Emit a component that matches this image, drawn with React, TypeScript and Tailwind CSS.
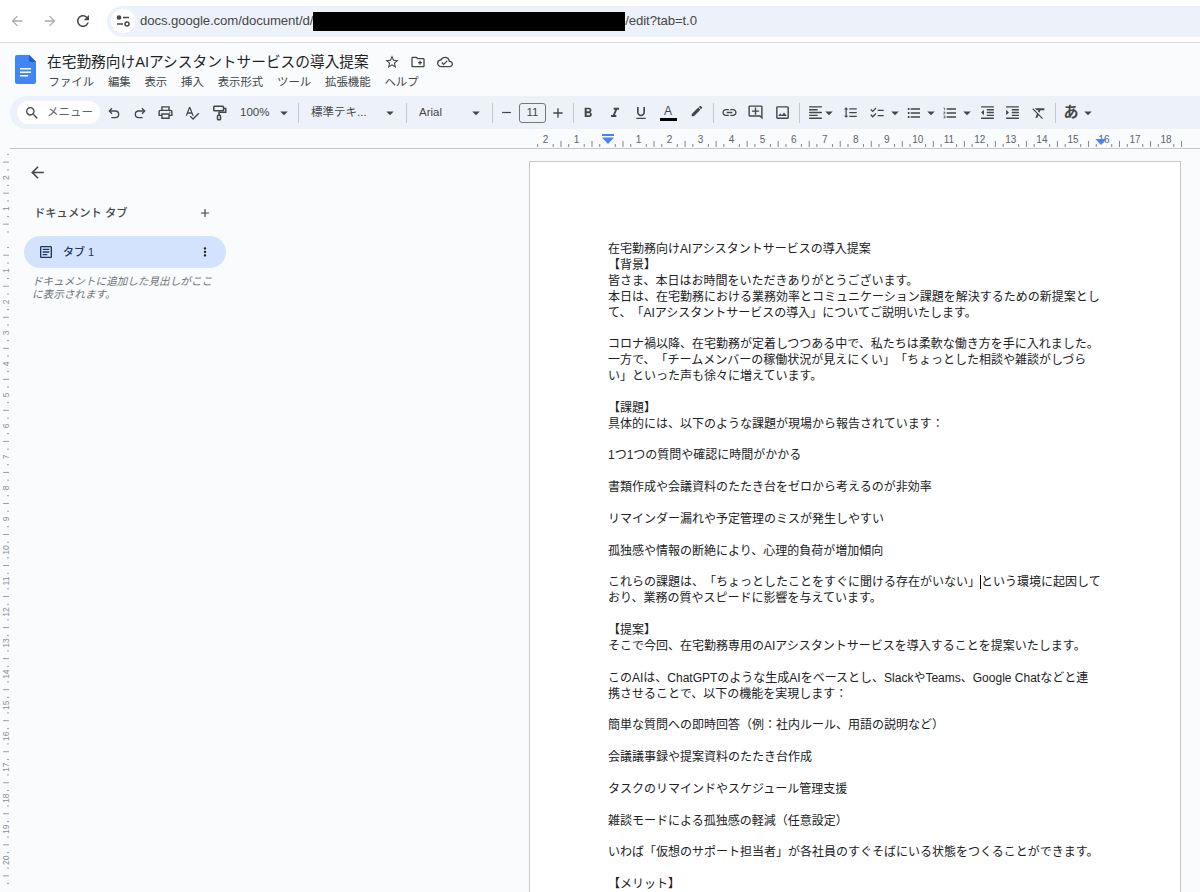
import React from "react";
import {
  MdArrowBack, MdArrowForward, MdRefresh, MdSearch, MdOutlinePrint, MdSpellcheck,
  MdFormatBold, MdFormatItalic, MdFormatUnderlined, MdLink, MdOutlineAddComment,
  MdOutlineImage, MdFormatAlignLeft, MdFormatLineSpacing, MdChecklist, MdFormatListBulleted, MdFormatListNumbered,
  MdFormatIndentDecrease, MdFormatIndentIncrease, MdFormatClear, MdStarBorder, MdOutlineCreateNewFolder,
  MdOutlineCloudDone, MdAdd, MdMoreVert, MdOutlineArticle, MdRemove, MdArrowDropDown, MdEdit,
} from "react-icons/md";

const Slot = ({ className = "", children }: { className?: string; children?: React.ReactNode }) => (
  <div className={"flex h-6 shrink-0 items-center justify-center text-[#444746] " + className}>{children}</div>
);
const Caret = ({ className = "w-4" }: { className?: string }) => (
  <Slot className={className}><MdArrowDropDown className="shrink-0 text-[18px]" /></Slot>
);
const Divider = ({ className }: { className: string }) => (
  <Slot className={className}><div className="h-5 w-px shrink-0 bg-[#c7c7c7]" /></Slot>
);

const UndoIcon = () => (
  <svg width="16" height="16" viewBox="0 0 24 24" fill="none" stroke="#444746" strokeWidth="2">
    <path d="M9 5L5 9l4 4" />
    <path d="M5 9h9a5 5 0 0 1 0 10H8" />
  </svg>
);
const RedoIcon = () => (
  <svg width="16" height="16" viewBox="0 0 24 24" fill="none" stroke="#444746" strokeWidth="2">
    <path d="M15 5l4 4-4 4" />
    <path d="M19 9h-9a5 5 0 0 0 0 10h6" />
  </svg>
);
const PaintIcon = () => (
  <svg width="18" height="18" viewBox="0 0 24 24" fill="none" stroke="#444746" strokeWidth="2">
    <rect x="5" y="3" width="13" height="6" rx="1" />
    <path d="M18 6h3v5h-9v4" />
    <rect x="10" y="15" width="4" height="6" rx="1" />
  </svg>
);
const SiteIcon = () => (
  <svg width="16" height="16" viewBox="0 0 16 16" fill="none" stroke="#474747" strokeWidth="1.5">
    <circle cx="4" cy="4.5" r="1.6" fill="#474747" />
    <path d="M8 4.5h6" />
    <path d="M2 11h6" />
    <circle cx="12" cy="11" r="2" />
  </svg>
);

const CM = 31.03;
const ZERO_X = 597.5; // inside ruler svg (x=607.5 on page)
const HRuler = () => {
  const ticks: React.ReactNode[] = [];
  const labels: React.ReactNode[] = [];
  for (let i = -10; i <= 76; i++) {
    const x = ZERO_X + (i * CM) / 4;
    if (x < 520 || x > 1172) continue;
    const m = ((i % 4) + 4) % 4;
    if (m === 0) {
      const n = Math.abs(i / 4);
      if (n !== 0) labels.push(<text key={i} x={x} y={14} textAnchor="middle" fontSize="10" fill="#5f6368" fontFamily="Liberation Sans, sans-serif">{n}</text>);
    } else {
      const h = m === 2 ? 6 : 3;
      ticks.push(<line key={i} x1={x} x2={x} y1={18 - h} y2={18} stroke="#80868b" strokeWidth="1" />);
    }
  }
  return (
    <svg width="1190" height="19" viewBox="0 0 1190 19" className="block">
      {ticks}
      {labels}
      <path d="M592 5h12v2h-12z" fill="#4285f4" />
      <path d="M592 8.5h12l-6 6.5z" fill="#4285f4" />
      <path d="M1085.5 10h11l-5.5 6z" fill="#4285f4" />
    </svg>
  );
};

const VRuler = () => {
  const Y0 = 90.7; // y=239.7 on page
  const items: React.ReactNode[] = [];
  for (let i = -12; i <= 90; i++) {
    const y = Y0 + (i * CM) / 4;
    if (y < 0 || y > 745) continue;
    const m = ((i % 4) + 4) % 4;
    if (m === 0) {
      const n = Math.abs(i / 4);
      if (n !== 0 && y < 730)
        items.push(<text key={i} x={6} y={y} textAnchor="middle" fontSize="8.5" fill="#8a8f94" fontFamily="Liberation Sans, sans-serif" transform={`rotate(-90 6 ${y}) translate(0 3)`}>{n}</text>);
    } else {
      items.push(<line key={i} x1={m === 2 ? 3 : 7} x2={9} y1={y} y2={y} stroke="#9aa0a6" strokeWidth="1" />);
    }
  }
  return (
    <svg width="10" height="743" viewBox="0 0 10 743" className="block shrink-0">{items}</svg>
  );
};

const lines: React.ReactNode[] = [
  "在宅勤務向けAIアシスタントサービスの導入提案",
  "【背景】",
  "皆さま、本日はお時間をいただきありがとうございます。",
  "本日は、在宅勤務における業務効率とコミュニケーション課題を解決するための新提案とし",
  "て、「AIアシスタントサービスの導入」についてご説明いたします。",
  "",
  "コロナ禍以降、在宅勤務が定着しつつある中で、私たちは柔軟な働き方を手に入れました。",
  "一方で、「チームメンバーの稼働状況が見えにくい」「ちょっとした相談や雑談がしづら",
  "い」といった声も徐々に増えています。",
  "",
  "【課題】",
  "具体的には、以下のような課題が現場から報告されています：",
  "",
  "1つ1つの質問や確認に時間がかかる",
  "",
  "書類作成や会議資料のたたき台をゼロから考えるのが非効率",
  "",
  "リマインダー漏れや予定管理のミスが発生しやすい",
  "",
  "孤独感や情報の断絶により、心理的負荷が増加傾向",
  "",
  <>これらの課題は、「ちょっとしたことをすぐに聞ける存在がいない」<span className="border-l border-black" />という環境に起因して</>,
  "おり、業務の質やスピードに影響を与えています。",
  "",
  "【提案】",
  "そこで今回、在宅勤務専用のAIアシスタントサービスを導入することを提案いたします。",
  "",
  "このAIは、ChatGPTのような生成AIをベースとし、SlackやTeams、Google Chatなどと連",
  "携させることで、以下の機能を実現します：",
  "",
  "簡単な質問への即時回答（例：社内ルール、用語の説明など）",
  "",
  "会議議事録や提案資料のたたき台作成",
  "",
  "タスクのリマインドやスケジュール管理支援",
  "",
  "雑談モードによる孤独感の軽減（任意設定）",
  "",
  "いわば「仮想のサポート担当者」が各社員のすぐそばにいる状態をつくることができます。",
  "",
  "【メリット】",
];

export default function App() {
  return (
    <div className="flex h-[892px] w-[1200px] flex-col overflow-hidden bg-[#f9fbfd] text-[#1f1f1f] [font-family:'Liberation_Sans','Noto_Sans_CJK_JP',sans-serif] [text-spacing-trim:space-all]">
      {/* browser bar */}
      <div className="flex h-[43px] shrink-0 items-center border-b border-[#dadce0] bg-white">
        <MdArrowBack className="ml-[9px] shrink-0 text-[16px] text-[#a8abae]" />
        <MdArrowForward className="ml-[17px] shrink-0 text-[16px] text-[#a8abae]" />
        <MdRefresh className="ml-[16px] shrink-0 text-[18px] text-[#474747]" />
        <div className="ml-[15px] flex h-[31px] flex-1 items-center rounded-l-full bg-[#edf2fa] pl-[4px]">
          <div className="flex h-[24px] w-[24px] shrink-0 items-center justify-center rounded-full bg-white">
            <SiteIcon />
          </div>
          <span className="ml-[5px] text-[13.2px] tracking-[-0.1px] text-[#474747]">docs.google.com/document/d/</span>
          <div className="h-[19px] w-[312px] shrink-0 bg-black" />
          <span className="text-[13.2px] tracking-[-0.1px] text-[#474747]">/edit?tab=t.0</span>
        </div>
      </div>

      {/* docs header */}
      <div className="flex h-[53px] shrink-0 items-start pl-[15px] pt-[12px]">
        <svg width="21" height="29" viewBox="0 0 21 29" className="shrink-0">
          <path d="M2 0h12.5L21 6.5V27a2 2 0 0 1-2 2H2a2 2 0 0 1-2-2V2a2 2 0 0 1 2-2z" fill="#4285f4" />
          <path d="M14 0l7 7h-5a2 2 0 0 1-2-2z" fill="#1a5fd0" />
          <path d="M5 13h11v1.6H5zM5 16.5h11v1.6H5zM5 20h8v1.6H5z" fill="#fff" />
        </svg>
        <div className="ml-[11px] flex flex-col">
          <div className="flex h-[14px] items-center">
            <span className="text-[14.7px] leading-[14px] text-[#1f1f1f]">在宅勤務向けAIアシスタントサービスの導入提案</span>
            <MdStarBorder className="ml-[15px] shrink-0 text-[16px] text-[#444746]" />
            <MdOutlineCreateNewFolder className="ml-[10px] shrink-0 text-[16px] text-[#444746]" />
            <MdOutlineCloudDone className="ml-[11px] shrink-0 text-[16px] text-[#444746]" />
          </div>
          <div className="ml-[1.5px] mt-[5px] flex gap-[13.8px] text-[11.4px] leading-[17px] text-[#444746]">
            <span>ファイル</span><span>編集</span><span>表示</span><span>挿入</span><span>表示形式</span><span>ツール</span><span>拡張機能</span><span>ヘルプ</span>
          </div>
        </div>
      </div>

      {/* toolbar */}
      <div className="ml-[10px] flex h-[33px] shrink-0 items-center rounded-l-[16px] bg-[#edf2fa] pl-[7px] text-[11.5px] text-[#444746]">
        <div className="flex h-[23px] w-[83px] shrink-0 items-center rounded-full bg-white pl-[7px]">
          <MdSearch className="shrink-0 text-[16px] text-[#444746]" />
          <span className="ml-[7px] whitespace-nowrap text-[11.5px] text-[#5f6368]">メニュー</span>
        </div>
        <Slot className="w-[27px]"><UndoIcon /></Slot>
        <Slot className="w-[26px]"><RedoIcon /></Slot>
        <Slot className="w-[25px]"><MdOutlinePrint className="text-[17px]" /></Slot>
        <Slot className="w-[27px]"><MdSpellcheck className="text-[16px]" /></Slot>
        <Slot className="w-[27px]"><PaintIcon /></Slot>
        <Slot className="w-[44px] !justify-start pl-[8px]">100%</Slot>
        <Caret />
        <Divider className="w-[12px]" />
        <Slot className="w-[78px] !justify-start pl-[7px] whitespace-nowrap">標準テキ...</Slot>
        <Caret />
        <Divider className="w-[16px]" />
        <Slot className="w-[54px] !justify-start pl-[5px]">Arial</Slot>
        <Caret />
        <Divider className="w-[17px]" />
        <Slot className="w-[10px]"><MdRemove className="shrink-0 text-[15px]" /></Slot>
        <div className="ml-[8px] flex h-[20px] w-[27px] shrink-0 items-center justify-center rounded-[3px] border border-[#747775] text-[11.5px]">11</div>
        <Slot className="w-[24px]"><MdAdd className="text-[16px]" /></Slot>
        <Divider className="w-[6px]" />
        <Slot className="w-[24px]"><MdFormatBold className="text-[16px]" /></Slot>
        <Slot className="w-[29px]"><MdFormatItalic className="text-[16px]" /></Slot>
        <Slot className="w-[24px]"><MdFormatUnderlined className="text-[16px]" /></Slot>
        <Slot className="w-[30px]">
          <div className="flex flex-col items-center">
            <span className="text-[12px] leading-[12px]">A</span>
            <div className="mt-[1px] h-[3px] w-[17px] bg-black" />
          </div>
        </Slot>
        <Slot className="w-[28px]"><MdEdit className="-mt-[3px] text-[14px]" /></Slot>
        <Divider className="w-[4px]" />
        <Slot className="w-[28px]"><MdLink className="text-[17px]" /></Slot>
        <Slot className="w-[25px]"><MdOutlineAddComment className="text-[17px]" /></Slot>
        <Slot className="w-[29px]"><MdOutlineImage className="text-[17px]" /></Slot>
        <Divider className="w-[4px]" />
        <Slot className="ml-[2px] w-[24px]"><MdFormatAlignLeft className="text-[17px]" /></Slot>
        <Caret className="w-[4px]" />
        <Slot className="ml-[7px] w-[24px]"><MdFormatLineSpacing className="text-[15px]" /></Slot>
        <Slot className="ml-[3px] w-[24px]"><MdChecklist className="text-[16px]" /></Slot>
        <Caret className="w-[12px]" />
        <Slot className="ml-[1px] w-[24px]"><MdFormatListBulleted className="text-[16px]" /></Slot>
        <Caret className="w-[10px]" />
        <Slot className="ml-[2px] w-[24px]"><MdFormatListNumbered className="text-[16px]" /></Slot>
        <Caret className="w-[10px]" />
        <Slot className="ml-[3px] w-[24px]"><MdFormatIndentDecrease className="text-[17px]" /></Slot>
        <Slot className="ml-[1px] w-[25px]"><MdFormatIndentIncrease className="text-[17px]" /></Slot>
        <Slot className="ml-[2px] w-[24px]"><MdFormatClear className="text-[16px]" /></Slot>
        <Divider className="w-[8px]" />
        <Slot className="w-[24px] text-[15px] font-bold text-[#1f1f1f]">あ</Slot>
        <Caret className="w-[10px]" />
      </div>

      {/* horizontal ruler */}
      <div className="ml-[10px] h-[20px] shrink-0 border-b border-[#c7c7c7]">
        <HRuler />
      </div>

      {/* body */}
      <div className="flex min-h-0 flex-1">
        <VRuler />
        <aside className="w-[519px] shrink-0 pl-[14px]">
          <div className="pl-[4px] pt-[14px]">
            <MdArrowBack className="text-[19px] text-[#444746]" />
          </div>
          <div className="mt-[22px] flex h-[18px] w-[202px] items-center justify-between pl-[10px] pr-[14px]">
            <span className="text-[11.3px] font-medium leading-[18px] text-[#444746]">ドキュメント タブ</span>
            <MdAdd className="shrink-0 text-[14px] text-[#444746]" />
          </div>
          <div className="mt-[14px] flex h-[32px] w-[202px] items-center rounded-full bg-[#d3e3fd] pl-[14px] pr-[14px]">
            <MdOutlineArticle className="shrink-0 text-[16px] text-[#1f3760]" />
            <span className="ml-[9px] flex-1 text-[11px] font-medium text-[#1f3760]">タブ 1</span>
            <MdMoreVert className="shrink-0 text-[14px] text-[#1f1f1f]" />
          </div>
          <p className="ml-[8px] mt-[7px] w-[186px] text-[10.6px] italic leading-[12.5px] text-[#70757a]">ドキュメントに追加した見出しがここに表示されます。</p>
        </aside>
        <main className="mt-[12px] w-[652px] shrink-0 border border-b-0 border-[#c7c7c7] bg-white pl-[78px] pt-[80px]">
          <div className="text-[12px] leading-[15.875px] text-[#202124]">
            {lines.map((l, i) => (
              <div key={i} className="h-[15.875px] whitespace-nowrap">{l}</div>
            ))}
          </div>
        </main>
      </div>
    </div>
  );
}
